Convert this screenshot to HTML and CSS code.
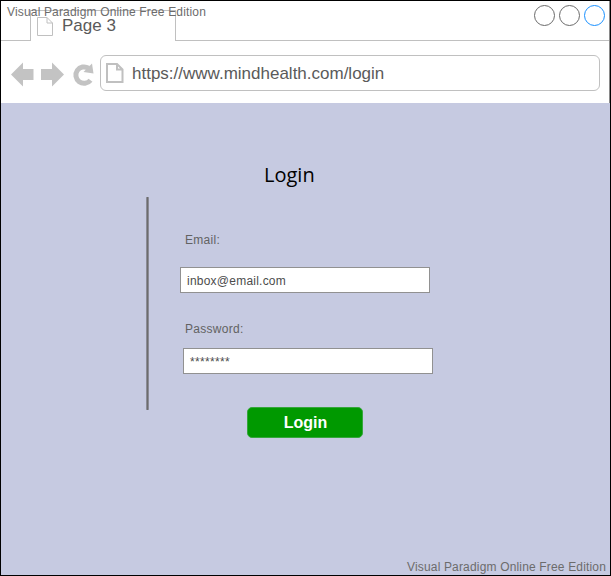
FILE: index.html
```html
<!DOCTYPE html>
<html lang="en">
<head>
<meta charset="utf-8">
<title>Login</title>
<link rel="stylesheet" href="styles.css">
</head>
<body>
<div class="window">
  <header class="chrome">
    <div class="tabs">
      <div class="tabs-start"></div>
      <div class="tab">
        <svg class="tab-icon" width="18" height="20" viewBox="0 0 18 20"><path d="M0.500 0.500H10L15.500 6V18.500H0.500ZM10 0.500V6H15.500"/></svg>
        <span class="tab-title">Page 3</span>
      </div>
      <div class="tabs-end">
        <span class="dot"></span><span class="dot"></span><span class="dot dot-active"></span>
      </div>
    </div>
    <div class="toolbar">
      <svg class="nav" width="84" height="26" viewBox="0 0 84 26">
        <path class="solid" d="M0 12.500L12 0.500V7H22.500V18H12V24.500ZM53 12.500L41 0.500V7H30V18H41V24.500Z"/>
        <path class="arc" d="M79.500 18.200A8.200 8.200 0 1 1 77.500 6.200"/>
        <path class="solid" d="M81 1.500L82.500 11.500L72.500 10Z"/>
      </svg>
      <div class="address">
        <svg class="page-icon" width="18" height="20" viewBox="0 0 18 20"><path d="M1 1H11L16.500 6.500V19H1ZM11 1V6.500H16.500"/></svg>
        <span class="url">https://www.mindhealth.com/login</span>
      </div>
    </div>
  </header>
  <main class="page">
    <div class="rule"></div>
    <form class="form">
      <h1 class="title">Login</h1>
      <label class="label" for="email">Email:</label>
      <div class="field" id="email">inbox@email.com</div>
      <label class="label label-password" for="password">Password:</label>
      <div class="field field-password" id="password">********</div>
      <button class="submit" type="button">Login</button>
    </form>
  </main>
  <span class="mark mark-top">Visual Paradigm Online Free Edition</span>
  <span class="mark mark-bottom">Visual Paradigm Online Free Edition</span>
</div>
</body>
</html>
```
FILE: styles.css
```css
* { box-sizing: border-box; }
body { margin: 0; font-family: "Liberation Sans", Arial, sans-serif; }
.window { position: relative; width: 611px; height: 576px; border: 1px solid #000; background: #fff; overflow: hidden; }
.chrome { height: 102px; border-right: 1px solid #8a8a8a; }
.tabs { display: flex; height: 40px; }
.tabs-start { width: 29px; border-bottom: 1px solid #c0c0c0; }
.tab { display: flex; width: 146px; height: 31px; margin-top: 9px; padding: 6px 0 0 6px; border: 1px solid #c0c0c0; border-bottom: 0; }
.tab-icon, .page-icon { fill: none; stroke: #c0c0c0; }
.tab-icon { stroke-width: 1; }
.page-icon { stroke-width: 2; }
.tab-title { margin: -1px 0 0 7px; font-size: 17px; line-height: 20px; color: #5a5a5a; }
.tabs-end { display: flex; flex: 1; justify-content: flex-end; gap: 4px; padding: 4px 4px 0 0; border-bottom: 1px solid #c0c0c0; }
.dot { width: 21px; height: 21px; border: 1px solid #6a6a6a; border-radius: 50%; }
.dot-active { border-color: #1890ff; }
.toolbar { display: flex; padding: 14px 9px 0 10px; }
.nav { margin-top: 7px; flex: none; }
.solid { fill: #c3c3c3; }
.arc { fill: none; stroke: #c3c3c3; stroke-width: 5; }
.address { display: flex; align-items: center; width: 500px; height: 36px; margin-left: 5px; padding-left: 5px; border: 1px solid #c0c0c0; border-radius: 6px; }
.url { margin: 1px 0 0 8px; font-size: 17px; line-height: 21px; color: #5a5a5a; }
.page { display: flex; height: 472px; background: #c6cae1; }
.rule { width: 3px; height: 213px; margin: 94px 0 0 145px; border: solid #8b8b96; border-width: 0 1px; background: #6c6c6c; border-radius: 1px; }
.form { display: flex; flex-direction: column; align-items: flex-start; margin-left: 31px; }
.title { margin: 58px 0 0 84px; font: 400 20px/28px "Open Sans", sans-serif; color: #000; }
.label { margin: 43px 0 0 5px; font-size: 12px; line-height: 16px; letter-spacing: 0.280px; color: #626262; }
.field { display: flex; align-items: center; width: 250px; height: 26px; margin-top: 19px; padding: 1px 0 0 6px; border: 1px solid #919191; background: #fff; font-size: 12px; letter-spacing: 0.230px; color: #4c4c4c; }
.label-password { margin-top: 28px; }
.field-password { margin: 11px 0 0 3px; letter-spacing: 0.330px; }
.submit { width: 116px; height: 31px; margin: 33px 0 0 67px; padding: 0 0 0 1px; border: 1px solid #35a63b; border-radius: 5px; background: #090; color: #fff; font: bold 16px/20px "Liberation Sans", Arial, sans-serif; }
.mark { position: absolute; font-size: 12px; line-height: 14px; letter-spacing: 0.165px; color: #6c6c6c; white-space: nowrap; }
.mark-top { top: 4px; left: 6px; }
.mark-bottom { right: 4px; bottom: 1px; }
```
